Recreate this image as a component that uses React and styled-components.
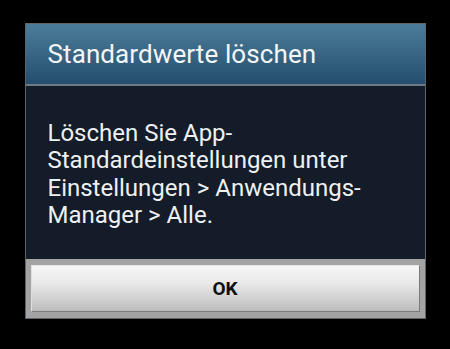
import React from "react";
import styled, { createGlobalStyle } from "styled-components";

const GlobalStyle = createGlobalStyle`
  html, body {
    margin: 0;
    padding: 0;
    background: #000;
  }
  body {
    font-family: Roboto, "Noto Sans", sans-serif;
  }
`;

const Screen = styled.div`
  width: 450px;
  height: 349px;
  background: #000;
  display: flex;
  justify-content: center;
  padding-top: 23px;
  box-sizing: border-box;
`;

const Dialog = styled.div`
  width: 401px;
  height: 296px;
  box-sizing: border-box;
  border: 1px solid #5f6468;
  display: flex;
  flex-direction: column;
  background: #141d29;
`;

const Header = styled.div`
  height: 62px;
  box-sizing: border-box;
  padding-left: 22px;
  display: flex;
  align-items: center;
  background: linear-gradient(#4b7d99 0%, #3a6886 45%, #244d6d 100%);
  border-bottom: 2px solid #6d7b86;
`;

const Title = styled.h1`
  margin: 0;
  font-size: 26px;
  font-weight: 400;
  color: #f4f6f8;
  letter-spacing: 0.1px;
`;

const Body = styled.div`
  flex: 1;
  padding: 34px 22px 0 22px;
  background: #131c28;
`;

const Message = styled.p`
  margin: 0;
  font-size: 24px;
  line-height: 27.3px;
  color: #eef0f2;
`;

const Footer = styled.div`
  height: 59px;
  box-sizing: border-box;
  background: #a3a3a3;
  padding: 6px 5px 6px 5px;
  display: flex;
`;

const Button = styled.button`
  flex: 1;
  border: none;
  border-right: 1px solid #7a7a7a;
  border-bottom: 1px solid #7a7a7a;
  border-top: 1px solid #e6e6e6;
  border-left: 1px solid #e0e0e0;
  background: linear-gradient(#f6f6f6 0%, #e8e8e8 40%, #cfcfcf 75%, #bcbcbc 100%);
  font-family: Roboto, "Noto Sans", sans-serif;
  font-weight: 700;
  font-size: 19px;
  color: #111;
  padding: 0;
`;

export default function App() {
  return (
    <>
      <GlobalStyle />
      <Screen>
        <Dialog>
          <Header>
            <Title>Standardwerte löschen</Title>
          </Header>
          <Body>
            <Message>
              Löschen Sie App-
              <br />
              Standardeinstellungen unter
              <br />
              Einstellungen &gt; Anwendungs-
              <br />
              Manager &gt; Alle.
            </Message>
          </Body>
          <Footer>
            <Button>OK</Button>
          </Footer>
        </Dialog>
      </Screen>
    </>
  );
}
